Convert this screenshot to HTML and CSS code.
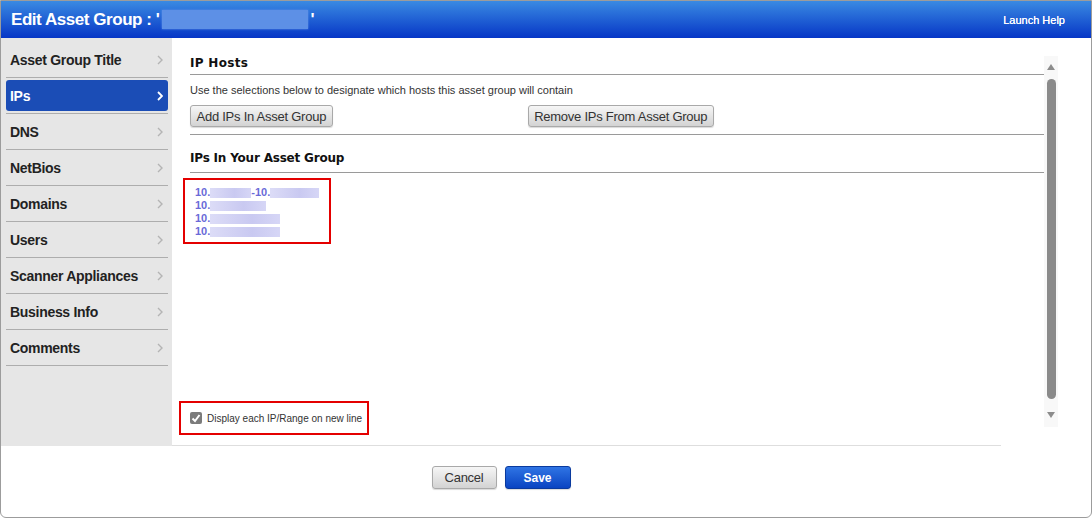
FILE: index.html
```html
<!DOCTYPE html>
<html lang="en">
<head>
    <meta charset="UTF-8">
    <title>Edit Asset Group</title>
    <link rel="stylesheet" href="styles.css">
</head>
<body>
    <div class="dialog">
        <div class="header">
            <h1>Edit Asset Group : '<span class="redact"></span>'</h1>
            <a class="help" href="#">Launch Help</a>
        </div>

        <div class="dialog-body">
            <ul class="sidebar">
                <li><a href="#">Asset Group Title<svg class="chev" viewBox="0 0 6 10"><polyline points="1,1 5,5 1,9"/></svg></a></li>
                <li><a href="#" class="active">IPs<svg class="chev" viewBox="0 0 6 10"><polyline points="1,1 5,5 1,9"/></svg></a></li>
                <li><a href="#">DNS<svg class="chev" viewBox="0 0 6 10"><polyline points="1,1 5,5 1,9"/></svg></a></li>
                <li><a href="#">NetBios<svg class="chev" viewBox="0 0 6 10"><polyline points="1,1 5,5 1,9"/></svg></a></li>
                <li><a href="#">Domains<svg class="chev" viewBox="0 0 6 10"><polyline points="1,1 5,5 1,9"/></svg></a></li>
                <li><a href="#">Users<svg class="chev" viewBox="0 0 6 10"><polyline points="1,1 5,5 1,9"/></svg></a></li>
                <li><a href="#">Scanner Appliances<svg class="chev" viewBox="0 0 6 10"><polyline points="1,1 5,5 1,9"/></svg></a></li>
                <li><a href="#">Business Info<svg class="chev" viewBox="0 0 6 10"><polyline points="1,1 5,5 1,9"/></svg></a></li>
                <li><a href="#">Comments<svg class="chev" viewBox="0 0 6 10"><polyline points="1,1 5,5 1,9"/></svg></a></li>
            </ul>

            <div class="main">
                <div class="main-inner">
                    <div class="content">
                        <div class="section">
                            <h2 class="first">IP Hosts</h2>
                            <p class="desc">Use the selections below to designate which hosts this asset group will contain</p>
                            <div class="btn-row">
                                <button class="btn">Add IPs In Asset Group</button>
                                <button class="btn remove">Remove IPs From Asset Group</button>
                            </div>
                        </div>

                        <h2 class="second">IPs In Your Asset Group</h2>
                        <div class="ip-box">
                            <div class="ip">10.<span class="mask m1"></span>-10.<span class="mask m2"></span></div>
                            <div class="ip">10.<span class="mask m3"></span></div>
                            <div class="ip">10.<span class="mask m4"></span></div>
                            <div class="ip">10.<span class="mask m4"></span></div>
                        </div>

                        <label class="check-box">
                            <span class="check">
                                <svg viewBox="0 0 12 12"><polyline points="2.5,6.5 5,9 9.5,3"/></svg>
                            </span>
                            Display each IP/Range on new line
                        </label>
                    </div>

                    <div class="scrollbar">
                        <span class="arrow up"></span>
                        <span class="thumb"></span>
                        <span class="arrow down"></span>
                    </div>
                </div>
                <div class="main-rule"></div>
            </div>
        </div>

        <div class="footer">
            <button class="btn cancel">Cancel</button>
            <button class="btn save">Save</button>
        </div>
    </div>
</body>
</html>
```

FILE: styles.css
```css
* {
    margin: 0;
    padding: 0;
    box-sizing: border-box;
}

body {
    font-family: 'Liberation Sans', Arial, sans-serif;
    background: white;
}

.dialog {
    width: 1092px;
    height: 518px;
    border: 1px solid #9c9c9c;
    border-radius: 0 0 6px 6px;
    display: flex;
    flex-direction: column;
    overflow: hidden;
}

.header {
    height: 37px;
    flex: none;
    background: linear-gradient(#3a8ae2, #0636c6);
    display: flex;
    align-items: center;
    justify-content: space-between;
    padding: 0 26px 0 10px;
    color: white;
}

.header h1 {
    font-size: 17px;
    font-weight: bold;
    letter-spacing: -0.45px;
    display: flex;
    align-items: center;
}

.redact {
    display: inline-block;
    width: 146px;
    height: 19px;
    margin: 0 2px 0 3px;
    background: #5d90e6;
    box-shadow: 0 0 2px #5d90e6;
}

.help {
    color: white;
    font-size: 11px;
    text-decoration: none;
    text-shadow: 0 0 0.4px white;
}

.dialog-body {
    height: 408px;
    flex: none;
    display: flex;
}

.sidebar {
    width: 171px;
    flex: none;
    background: #e6e6e6;
    list-style: none;
    padding: 4px 4px 0 5px;
}

.sidebar li {
    padding: 2px 0;
    border-bottom: 1px solid #adadad;
}

.sidebar a {
    height: 31px;
    display: flex;
    align-items: center;
    justify-content: space-between;
    padding: 0 5px 0 4px;
    border-radius: 3px;
    color: #222;
    font-size: 14px;
    font-weight: bold;
    letter-spacing: -0.3px;
    text-decoration: none;
}

.sidebar a.active {
    background: #1b4db6;
    color: white;
}

.chev {
    width: 6px;
    height: 10px;
    fill: none;
    stroke: #b4b4b4;
    stroke-width: 1.4;
}

.active .chev {
    stroke: white;
    stroke-width: 1.8;
}

.main {
    flex: 1;
    display: flex;
    flex-direction: column;
}

.main-inner {
    flex: 1;
    display: flex;
}

.content {
    width: 872px;
    padding: 16px 0 10px 18px;
    display: flex;
    flex-direction: column;
}

h2 {
    font-family: 'DejaVu Sans', Verdana, sans-serif;
    font-size: 12px;
    font-weight: bold;
    letter-spacing: -0.2px;
    color: #111;
    line-height: 18px;
    border-bottom: 1px solid #9a9a9a;
}

h2.first {
    padding-bottom: 2px;
    letter-spacing: 0.3px;
}

h2.second {
    margin-top: 14px;
    padding-bottom: 5px;
}

.section {
    border-bottom: 1px solid #9a9a9a;
    padding-bottom: 7px;
}

.desc {
    margin-top: 9px;
    font-size: 11px;
    line-height: 13px;
    color: #333;
}

.btn-row {
    margin-top: 8px;
    display: flex;
    gap: 195px;
}

.btn {
    font-family: 'Liberation Sans', Arial, sans-serif;
    height: 22px;
    padding: 0 5.5px;
    font-size: 13px;
    letter-spacing: -0.25px;
    color: #333;
    background: linear-gradient(#f6f6f6, #d3d3d3);
    border: 1px solid #a9a9a9;
    border-radius: 3px;
    box-shadow: 0 1px 1px rgba(0,0,0,0.15);
}

.ip-box {
    margin: 5px 0 0 -7px;
    width: 148px;
    height: 66px;
    border: 2px solid #e40000;
    padding: 6px 0 0 10px;
}

.ip {
    height: 13px;
    line-height: 13px;
    font-size: 11px;
    font-weight: bold;
    color: #6a6ad8;
    display: flex;
    align-items: center;
}

.mask {
    display: inline-block;
    height: 10px;
    background: linear-gradient(90deg, #dcdcf7, #c9c9f1 60%, #d6d6f6);
}

.m1 { width: 41px; }
.m2 { width: 49px; }
.m3 { width: 56px; }
.m4 { width: 70px; }

.check-box {
    margin: auto 0 0 -11px;
    width: 190px;
    height: 34px;
    border: 2px solid #e40000;
    padding-left: 9px;
    display: flex;
    align-items: center;
    gap: 5px;
    font-size: 10px;
    color: #333;
}

.check {
    width: 12px;
    height: 12px;
    border-radius: 2px;
    background: #7b7b7b;
    display: flex;
}

.check svg {
    width: 12px;
    height: 12px;
    fill: none;
    stroke: white;
    stroke-width: 2;
}

.scrollbar {
    width: 14px;
    margin: 18px 0 18px;
    background: #f8f8f8;
    display: flex;
    flex-direction: column;
    align-items: center;
    padding-top: 8px;
}

.arrow {
    width: 0;
    height: 0;
    border-left: 4.5px solid transparent;
    border-right: 4.5px solid transparent;
}

.arrow.up {
    border-bottom: 6px solid #8c8c8c;
}

.arrow.down {
    border-top: 6px solid #8c8c8c;
    margin-top: 13px;
}

.thumb {
    width: 9px;
    height: 320px;
    margin-top: 9px;
    border-radius: 5px;
    background: #8a8a8a;
}

.main-rule {
    width: 829px;
    border-bottom: 1px solid #dedede;
}

.footer {
    width: 1000px;
    padding-top: 20px;
    display: flex;
    justify-content: center;
    gap: 8px;
}

.cancel {
    width: 65px;
    height: 23px;
}

.save {
    width: 66px;
    height: 23px;
    color: white;
    font-size: 12px;
    font-weight: bold;
    letter-spacing: 0;
    background: linear-gradient(#2f74e4, #0a44c2);
    border-color: #0a3a9e;
}
```
